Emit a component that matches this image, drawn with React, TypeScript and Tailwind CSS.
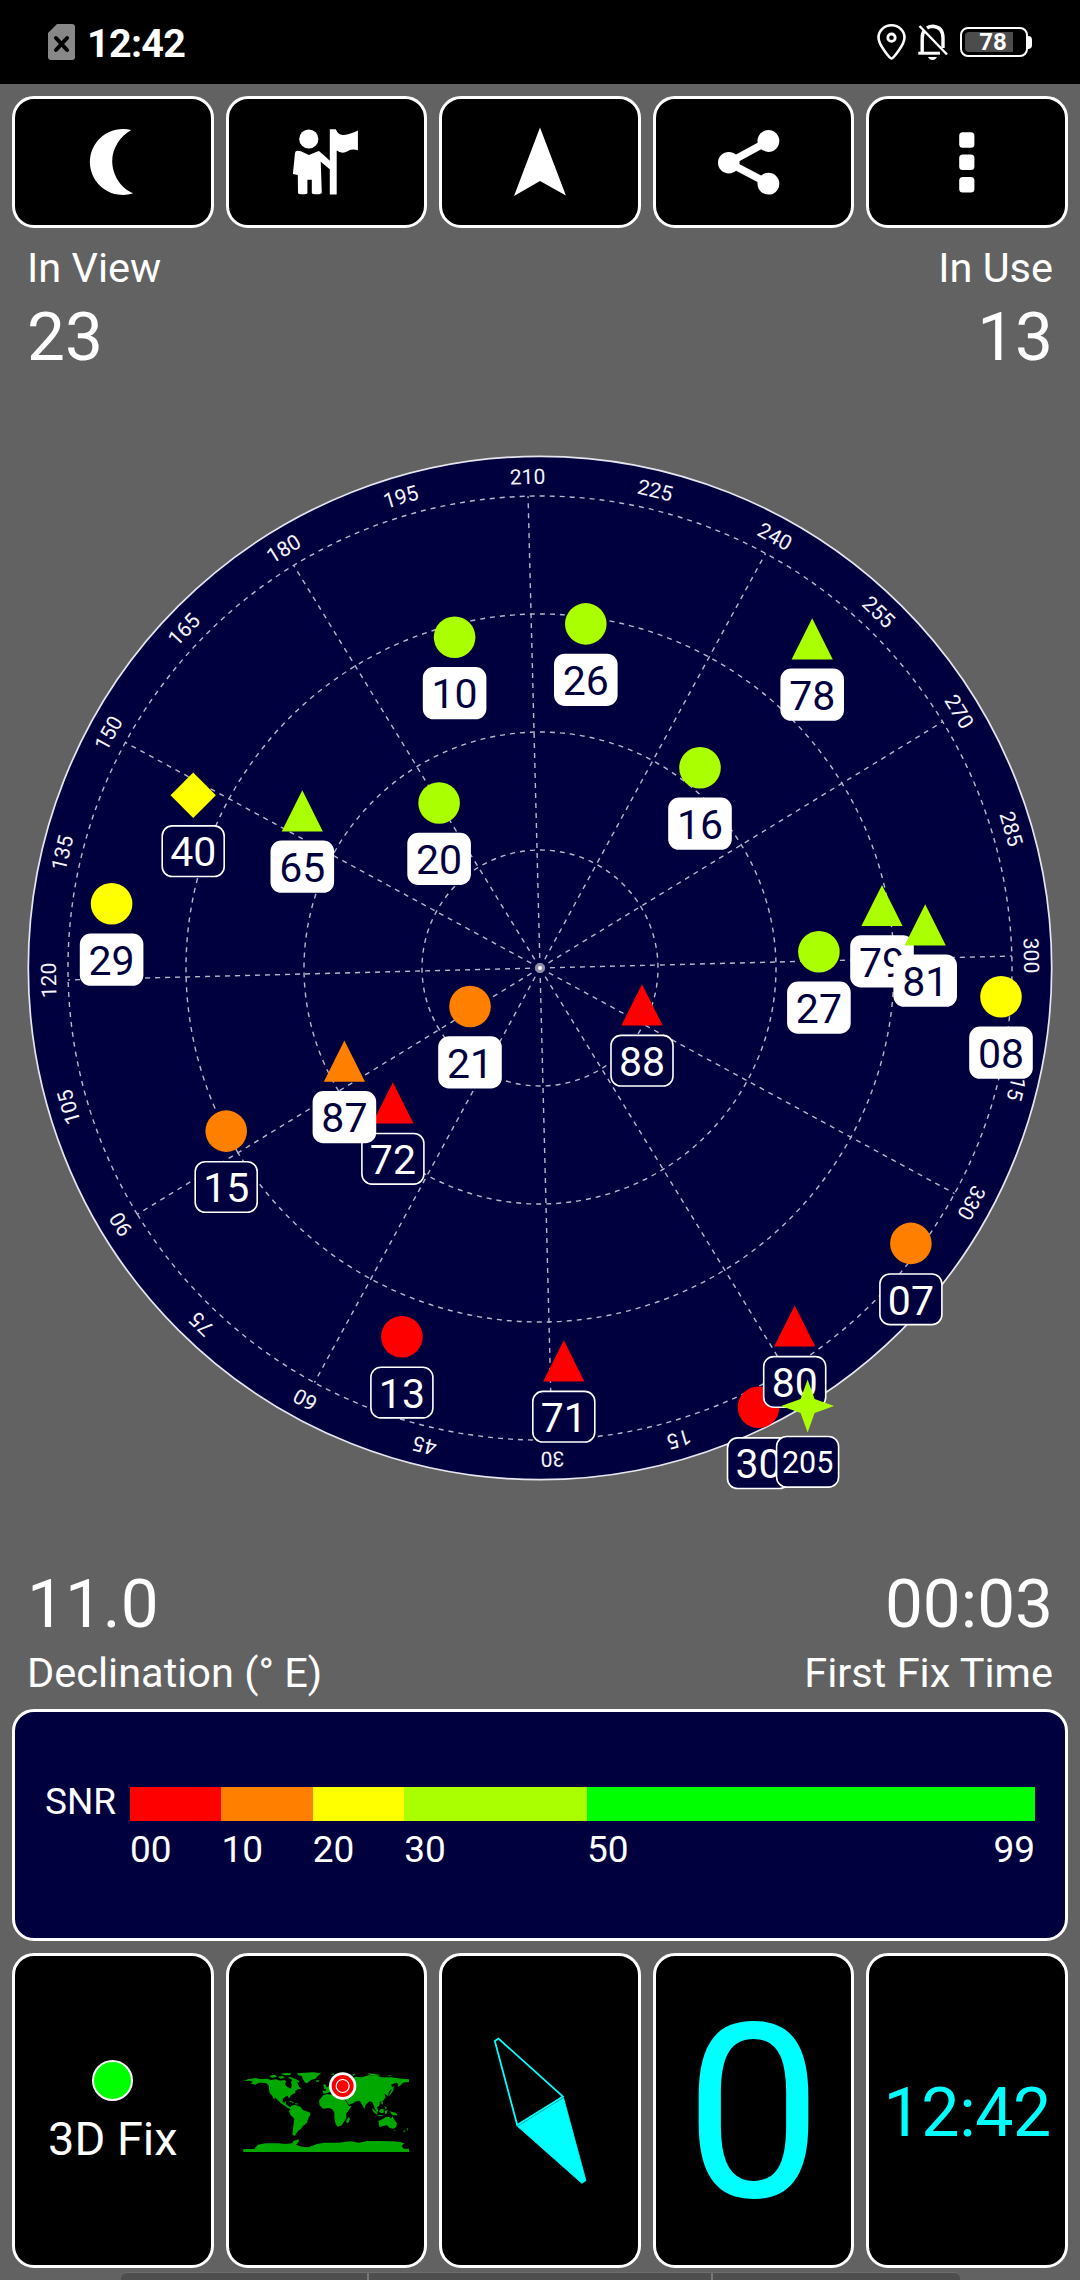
import type { ReactNode } from 'react';
import clsx from 'clsx';

const NAVY = '#00003e';
const RED = '#ff0000';
const ORANGE = '#ff8000';
const YELLOW = '#ffff00';
const LIME = '#aaff00';
const GREEN = '#00ff00';

type Shape = 'circle' | 'triangle' | 'diamond' | 'star';

interface Satellite {
  id: string;
  shape: Shape;
  color: string;
  used: boolean;
  x: number;
  y: number;
}

// offsets are measured from the centre of the sky plot
const satellites: Satellite[] = [
  { id: '10', shape: 'circle', color: LIME, used: true, x: -85.4, y: -330.7 },
  { id: '26', shape: 'circle', color: LIME, used: true, x: 45.8, y: -344.1 },
  { id: '78', shape: 'triangle', color: LIME, used: true, x: 272.2, y: -329.2 },
  { id: '16', shape: 'circle', color: LIME, used: true, x: 160, y: -200.2 },
  { id: '20', shape: 'circle', color: LIME, used: true, x: -100.9, y: -165 },
  { id: '40', shape: 'diamond', color: YELLOW, used: false, x: -346.8, y: -172.7 },
  { id: '65', shape: 'triangle', color: LIME, used: true, x: -237.7, y: -157.2 },
  { id: '29', shape: 'circle', color: YELLOW, used: true, x: -428.4, y: -64.2 },
  { id: '79', shape: 'triangle', color: LIME, used: true, x: 342, y: -62.5 },
  { id: '81', shape: 'triangle', color: LIME, used: true, x: 385.2, y: -43.2 },
  { id: '27', shape: 'circle', color: LIME, used: true, x: 278.9, y: -16.3 },
  { id: '08', shape: 'circle', color: YELLOW, used: true, x: 461, y: 28.8 },
  { id: '88', shape: 'triangle', color: RED, used: false, x: 102, y: 36.8 },
  { id: '21', shape: 'circle', color: ORANGE, used: true, x: -70, y: 38.5 },
  { id: '72', shape: 'triangle', color: RED, used: false, x: -147.1, y: 134.9 },
  { id: '87', shape: 'triangle', color: ORANGE, used: true, x: -195.6, y: 93.2 },
  { id: '15', shape: 'circle', color: ORANGE, used: false, x: -313.8, y: 163.1 },
  { id: '13', shape: 'circle', color: RED, used: false, x: -138.1, y: 368.7 },
  { id: '71', shape: 'triangle', color: RED, used: false, x: 23.8, y: 392.8 },
  { id: '07', shape: 'circle', color: ORANGE, used: false, x: 370.9, y: 275.4 },
  { id: '30', shape: 'circle', color: RED, used: false, x: 218.5, y: 439.3 },
  { id: '80', shape: 'triangle', color: RED, used: false, x: 254.7, y: 358 },
  { id: '205', shape: 'star', color: LIME, used: false, x: 267.6, y: 437.9 },
];

const snrBands = [
  { from: 0, to: 10, color: RED },
  { from: 10, to: 20, color: ORANGE },
  { from: 20, to: 30, color: YELLOW },
  { from: 30, to: 50, color: LIME },
  { from: 50, to: 99, color: GREEN },
];

const HEADING = 211.45;

const SatelliteShape = ({ shape, color }: { shape: Shape; color: string }) => {
  if (shape === 'circle') return <circle r="20.8" fill={color} />;
  if (shape === 'triangle') return <path d="M0-20.6 20.6 20.6H-20.6Z" fill={color} />;
  if (shape === 'diamond') return <path d="M0-22.7 22.7 0 0 22.7-22.7 0Z" fill={color} />;
  return <path d="M0-26.5 7-7 26.5 0 7 7 0 26.5-7 7-26.5 0-7-7Z" fill={color} />;
};

const SkyPlot = () => (
  <svg className="block h-[1100px] w-[1080px]" viewBox="-540 -548 1080 1100" fontFamily="Roboto, sans-serif">
    <circle r="511.7" fill={NAVY} stroke="#e6e6f0" strokeWidth="1.7" />
    <g transform={`rotate(${-HEADING})`}>
      <g fill="none" stroke="#b8b8cc" strokeWidth="1.4" strokeDasharray="5 5">
        {[118, 236, 354, 472].map((r) => (
          <circle key={r} r={r} />
        ))}
        {Array.from({ length: 12 }, (_, i) => (
          <line key={i} x1="0" y1="0" x2="0" y2="-472" transform={`rotate(${i * 30})`} />
        ))}
      </g>
      {Array.from({ length: 24 }, (_, i) => (
        <text key={i} y="-484" fill="#f4f4fa" fontSize="21" textAnchor="middle" transform={`rotate(${i * 15})`}>
          {i * 15}
        </text>
      ))}
    </g>
    <circle r="5" fill="#8f8fa6" />
    <circle r="2" fill="#fff" />
    {satellites.map((sat) => (
      <g key={sat.id} transform={`translate(${sat.x} ${sat.y})`}>
        <SatelliteShape shape={sat.shape} color={sat.color} />
        <rect
          x="-31"
          y="30.6"
          width="62"
          height="50.6"
          rx="10"
          fill={sat.used ? '#fff' : NAVY}
          stroke="#fff"
          strokeWidth="1.6"
        />
        <text
          y={sat.id.length > 2 ? 67.5 : 71.2}
          fontSize={sat.id.length > 2 ? 30.5 : 41}
          textAnchor="middle"
          fill={sat.used ? NAVY : '#fff'}
        >
          {sat.id}
        </text>
      </g>
    ))}
  </svg>
);

const StatusBar = () => (
  <div className="flex h-[84px] shrink-0 items-center justify-between bg-black pr-[48px] pl-12">
    <div className="flex items-center">
      <svg className="h-9 w-[27px]" viewBox="0 0 27 36">
        <path d="M9 0H24Q27 0 27 3V33Q27 36 24 36H3Q0 36 0 33V9Z" fill="#888" />
        <path d="M8 14 19 26M19 14 8 26" stroke="#000" strokeWidth="4" strokeLinecap="round" />
      </svg>
      <span className="mt-[3px] ml-3 text-[39.5px] leading-[46px] font-bold tracking-[-0.7px]">12:42</span>
    </div>
    <div className="flex items-center">
      <svg className="h-9 w-[29px]" viewBox="0 0 29 36" fill="none" stroke="#fff">
        <path d="M14.5 34.5C13 34.5 1.5 21 1.5 13.5A13 12.2 0 0 1 27.5 13.5C27.5 21 16 34.5 14.5 34.5Z" strokeWidth="2.6" />
        <circle cx="14.5" cy="13.7" r="3.7" strokeWidth="2.8" />
      </svg>
      <svg className="ml-3 h-9 w-[30px]" viewBox="0 0 30 36" fill="none" stroke="#fff" strokeWidth="3.4">
        <path d="M4.2 29V14Q4.2 9 6.5 6.5M9 4Q11.5 2.2 15 2.2Q25 3 25 14V24" />
        <path d="M0.3 29.2H22" strokeWidth="3" />
        <path d="M1.5 2 29 30.5" strokeWidth="2.5" />
        <path d="M10 33H19Q17.5 36 14.5 36Q11.5 36 10 33Z" fill="#fff" stroke="none" />
      </svg>
      <div className="ml-3 flex items-center">
        <div className="relative flex h-[30px] w-[68px] items-center justify-center rounded-[8px] border-2 border-white">
          <div className="absolute top-[3px] left-[3px] h-5 w-12 rounded-l-[4px] bg-[#4c4c4c]" />
          <span className="relative mr-[2px] text-[24px] leading-none font-bold">78</span>
        </div>
        <div className="h-[13px] w-1 rounded-r-full bg-white" />
      </div>
    </div>
  </div>
);

const Tile = ({ children, className }: { children: ReactNode; className?: string }) => (
  <div className={clsx('flex items-center justify-center rounded-[22px] border-[3px] border-white bg-black', className)}>
    {children}
  </div>
);

const ToolIcon = ({ children }: { children: ReactNode }) => (
  <svg className="h-[72px] w-[72px]" viewBox="0 0 72 72" fill="#fff">
    {children}
  </svg>
);

const Toolbar = () => (
  <div className="mt-3 grid h-[132px] shrink-0 grid-cols-5 gap-3 px-3">
    <Tile>
      <ToolIcon>
        <path d="M54.1 4C43 10.5 35.2 22.5 35.2 35C35.2 49 44 62.5 56.2 67.3A33 33 0 1 1 54.1 4Z" />
      </ToolIcon>
    </Tile>
    <Tile>
      <ToolIcon>
        <circle cx="18.8" cy="13" r="9.6" />
        <path d="M39.8 3.2H45.8L47.2 6Q49.5 9.2 54 9Q60 8.5 67.9 4.6V24.2Q62 22.5 58 25Q52 28.5 46.7 24.5V68.6H39.8V43.2L30.7 35.8 31.8 66.5Q31.8 68.3 27 68.3Q21.8 68.3 21.8 67V53.7H17.4V67Q17.4 68.3 12.8 68.3Q8 68.3 8 67L7.8 49L2.9 48L5 27Q5.3 23.5 10.9 25.2L18.8 29 28.8 25Q30.5 26 39.8 34.7Z" />
      </ToolIcon>
    </Tile>
    <Tile>
      <ToolIcon>
        <path d="M36 1.5 61.9 69.5 36 55 10 70Z" />
      </ToolIcon>
    </Tile>
    <Tile>
      <ToolIcon>
        <path d="M50.4 15 10.8 36.7 50.4 57.7" fill="none" stroke="#fff" strokeWidth="7.5" />
        <circle cx="10.8" cy="36.7" r="10.8" />
        <circle cx="50.4" cy="15" r="10.9" />
        <circle cx="50.4" cy="57.7" r="10.9" />
      </ToolIcon>
    </Tile>
    <Tile>
      <ToolIcon>
        <rect x="28.2" y="6.3" width="15.2" height="15.5" rx="3.5" />
        <rect x="28.2" y="28.6" width="15.2" height="15.5" rx="3.5" />
        <rect x="28.2" y="51" width="15.2" height="15.5" rx="3.5" />
      </ToolIcon>
    </Tile>
  </div>
);

const SnrLegend = () => (
  <div className="mx-3 mt-3 flex h-[232px] shrink-0 rounded-[22px] border-[3px] border-white bg-[#00003e] pl-[29px] text-[37px]">
    <span className="mt-[70px] w-[86px] shrink-0 pl-px leading-[40px]">SNR</span>
    <div className="mt-[75px] flex w-[905px]">
      {snrBands.map((band) => (
        <div key={band.from} style={{ width: `${((band.to - band.from) / 99) * 100}%` }}>
          <div className="h-[34px]" style={{ backgroundColor: band.color }} />
          <div className="mt-[9px] flex justify-between leading-[40px]">
            <span>{String(band.from).padStart(2, '0')}</span>
            {band.to === 99 && <span>99</span>}
          </div>
        </div>
      ))}
    </div>
  </div>
);

const WorldMap = () => (
  <svg className="h-[105px] w-[185px]" viewBox="0 0 555 315" fill="#00a800">
    {/* the Americas */}
    <path d="M25 60H34L40 57 50 56 60 54 76 57 98 56 108 60 122 58 136 62 148 60 154 64 150 72 156 80 168 86 170 74 168 66 174 57 182 62 188 70 192 80 200 86 188 88 180 94 182 98 174 102 166 108 162 116 158 108 150 110 144 116 142 124 148 128 154 122 152 132 160 138 170 144 168 148 158 144 150 138 138 130 128 120 120 112 118 120 112 108 104 98 102 88 102 78 94 70 82 68 72 68 60 74 46 70 54 66 46 62 36 63Z" />
    <path d="M104 47 120 44 126 50 116 53 106 52ZM128 50 142 48 150 54 136 56ZM136 42 150 39 170 40 164 46 150 46ZM158 50 168 52 184 58 194 64 190 68 178 62 166 57ZM162 122 176 126 174 129 164 125ZM178 128 190 131 186 134Z" />
    <path d="M186 40 210 38 236 37 258 40 248 48 242 56 228 60 216 70 210 68 204 58 200 48 188 45ZM243 61 254 61 250 66 244 65Z" />
    <path d="M168 138 180 134 196 140 204 150 226 158 226 166 220 174 216 188 204 198 198 206 190 212 184 220 180 228 172 224 174 208 176 190 178 176 166 164 162 154 166 148Z" />
    {/* Africa, Europe and Asia */}
    <path d="M264 106 276 102 292 104 298 108 312 110 324 114 334 126 342 138 350 138 342 150 334 160 334 174 328 184 320 196 308 200 302 192 298 174 298 158 292 148 282 144 264 146 254 136 252 122Z" />
    <path d="M341 171 345 177 340 188 335 190 334 181Z" />
    <path d="M262 92 274 92 272 86 284 76 290 64 298 54 312 46 334 52 352 56 360 50 380 52 400 46 420 46 440 52 470 52 500 56 522 58V66L504 68 494 78 488 82 490 72 484 68 468 74 474 84 462 94 460 108 448 102 452 112 444 122 434 126 434 136 426 142 430 152 426 158 418 142 412 126 404 124 392 134 388 146 380 132 374 122 364 124 354 130 342 134 334 122 326 112 318 106 302 102 292 92 280 98 266 102Z" />
    <path d="M265 74 271 72 275 82 280 86 268 87ZM399 40 414 41 438 45 426 48 404 44ZM458 45 472 47 462 49ZM286 42 298 40 296 45ZM352 43 362 42 354 49ZM472 82 476 78 475 92 468 102 458 110 466 98ZM438 122 444 126 444 134 439 130Z" />
    {/* Indonesia and Oceania */}
    <path d="M410 144 418 150 428 160 424 164 414 154ZM436 148 446 146 446 158 438 160 432 154ZM450 152 458 150 456 160 450 162ZM428 164 444 166 442 169 428 167ZM464 154 482 158 488 166 472 166ZM448 137 456 145 452 149Z" />
    <path d="M430 184 444 176 454 170 464 172 468 176 472 168 480 182 486 190 484 200 476 206 464 204 456 196 444 198 434 202Z" />
    <path d="M477 209 482 209 480 214ZM515 203 520 206 516 212ZM504 214 512 209 508 217Z" />
    {/* Antarctica */}
    <path d="M25 276V267H58L68 254 92 250 130 250 150 252 172 250 176 242 192 238 190 248 182 254 200 260 220 262 246 252 268 248 310 248 346 244 372 248 396 243 430 243 468 244 496 246 508 250 500 258 506 266H522V276Z" />
    <circle cx="323" cy="78" r="41" fill="#fff" />
    <circle cx="323" cy="78" r="33" fill="#f40000" />
    <circle cx="323" cy="78" r="19.5" fill="#f00" stroke="#fff" strokeWidth="3.5" />
  </svg>
);

const BottomTiles = () => (
  <div className="mt-3 grid h-[315px] shrink-0 grid-cols-5 gap-3 px-3">
    <Tile className="flex-col pt-[5px]">
      <div className="h-[41px] w-[41px] rounded-full border-2 border-white bg-[#00ff00]" />
      <span className="mt-[10px] text-[47px] leading-[56px]">3D Fix</span>
    </Tile>
    <Tile className="pt-[3px] pl-[2px]">
      <WorldMap />
    </Tile>
    <Tile>
      <svg className="h-[150px] w-[100px]" viewBox="490 2036 100 150" stroke="#00ffff" strokeWidth="1.8">
        <path d="M494.8 2041 498.5 2038.6 563 2096.5 517.2 2125Z" fill="none" />
        <path d="M563.6 2098 586 2180.7 581.8 2183.3 517.6 2126.4Z" fill="#00ffff" strokeWidth="0.8" />
      </svg>
    </Tile>
    <Tile className="overflow-hidden pt-[7px]">
      <span className="text-[244px] leading-none text-[#00ffff]">0</span>
    </Tile>
    <Tile className="pt-[5px]">
      <span className="text-[68px] leading-[80px] tracking-[-0.4px] text-[#00ffff]">12:42</span>
    </Tile>
  </div>
);

const Stats = ({ children, className }: { children: ReactNode; className?: string }) => (
  <div className={clsx('flex shrink-0 items-center justify-between px-[27px]', className)}>{children}</div>
);

const App = () => {
  return (
    <div className="flex h-[2280px] w-[1080px] flex-col overflow-hidden bg-[#626262] font-['Roboto',sans-serif] text-white">
      <StatusBar />
      <Toolbar />
      <Stats className="mt-4 h-12 text-[41.5px] leading-[48px]">
        <span>In View</span>
        <span>In Use</span>
      </Stats>
      <Stats className="mt-[5px] h-20 text-[67.5px] leading-[80px]">
        <span>23</span>
        <span>13</span>
      </Stats>
      <div className="mt-[43px] h-[1100px] shrink-0">
        <SkyPlot />
      </div>
      <Stats className="mt-11 h-20 text-[67.5px] leading-[80px]">
        <span>11.0</span>
        <span>00:03</span>
      </Stats>
      <Stats className="mt-[5px] h-12 text-[41.5px] leading-[48px]">
        <span>Declination (° E)</span>
        <span>First Fix Time</span>
      </Stats>
      <SnrLegend />
      <BottomTiles />
      {/* top edge of the page drawer */}
      <div className="mt-1 ml-[121px] grid h-2 w-[839px] shrink-0 grid-cols-[248px_344px_1fr] divide-x-2 divide-[#777] rounded-t-[6px] border-t border-[#6e6e6e] bg-[#4e4e4e]">
        <div />
        <div />
        <div />
      </div>
    </div>
  );
};

export default App;
